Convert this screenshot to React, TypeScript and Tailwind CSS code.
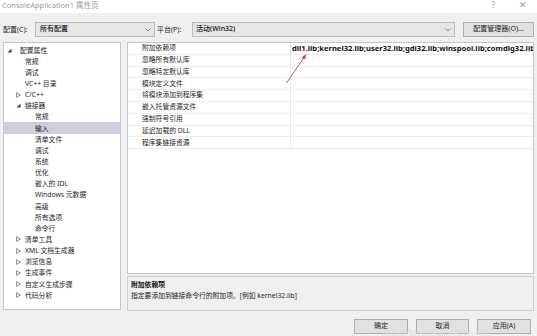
import React from 'react';

type Node = { t: string; k: 'l0' | 'l1t' | 'l1' | 'l2'; tri?: 'open' | 'closed'; sel?: boolean };

const tree: Node[] = [
  { t: '配置属性', k: 'l0', tri: 'open' },
  { t: '常规', k: 'l1' },
  { t: '调试', k: 'l1' },
  { t: 'VC++ 目录', k: 'l1' },
  { t: 'C/C++', k: 'l1t', tri: 'closed' },
  { t: '链接器', k: 'l1t', tri: 'open' },
  { t: '常规', k: 'l2' },
  { t: '输入', k: 'l2', sel: true },
  { t: '清单文件', k: 'l2' },
  { t: '调试', k: 'l2' },
  { t: '系统', k: 'l2' },
  { t: '优化', k: 'l2' },
  { t: '嵌入的 IDL', k: 'l2' },
  { t: 'Windows 元数据', k: 'l2' },
  { t: '高级', k: 'l2' },
  { t: '所有选项', k: 'l2' },
  { t: '命令行', k: 'l2' },
  { t: '清单工具', k: 'l1t', tri: 'closed' },
  { t: 'XML 文档生成器', k: 'l1t', tri: 'closed' },
  { t: '浏览信息', k: 'l1t', tri: 'closed' },
  { t: '生成事件', k: 'l1t', tri: 'closed' },
  { t: '自定义生成步骤', k: 'l1t', tri: 'closed' },
  { t: '代码分析', k: 'l1t', tri: 'closed' },
];

const padMap: Record<Node['k'], string> = {
  l0: 'pl-[3px]',
  l1t: 'pl-[12px]',
  l1: 'pl-[21px]',
  l2: 'pl-[31px]',
};
const slotMap: Record<Node['k'], string> = {
  l0: 'w-[13px]',
  l1t: 'w-[9px]',
  l1: 'w-0',
  l2: 'w-0',
};

const props = [
  '附加依赖项',
  '忽略所有默认库',
  '忽略特定默认库',
  '模块定义文件',
  '将模块添加到程序集',
  '嵌入托管资源文件',
  '强制符号引用',
  '延迟加载的 DLL',
  '程序集链接资源',
];

function Tri({ kind }: { kind: 'open' | 'closed' }) {
  if (kind === 'open')
    return (
      <svg width="5" height="5" viewBox="0 0 5 5">
        <polygon points="4.5,0.5 4.5,4.5 0.5,4.5" fill="#404040" />
      </svg>
    );
  return (
    <svg width="5" height="6" viewBox="0 0 5 6">
      <polygon points="0.6,0.6 4.4,3 0.6,5.4" fill="none" stroke="#707070" strokeWidth="0.8" />
    </svg>
  );
}

function Chevron() {
  return (
    <svg width="6" height="4" viewBox="0 0 6 4">
      <polyline points="0.5,0.5 3,3 5.5,0.5" fill="none" stroke="#777" strokeWidth="0.8" />
    </svg>
  );
}

export default function App() {
  return (
    <div className="relative w-[537px] h-[336px] overflow-hidden bg-[#f0f0f0] font-['Noto_Sans','Noto_Sans_CJK_SC',sans-serif] text-[#1e1e1e]">
      {/* title bar */}
      <div className="h-[13px] bg-white flex items-start justify-between">
        <div className="pl-[2px] text-[7.5px] leading-[10px] text-[#9a9a9a]">ConsoleApplication1 属性页</div>
        <div className="flex items-start gap-[24px] pr-[10px] text-[#9a9a9a]">
          <span className="text-[8px] leading-[10px]">?</span>
          <span className="text-[9px] leading-[10px]">✕</span>
        </div>
      </div>

      {/* toolbar */}
      <div className="mt-[9px] h-[15px] flex items-center pl-[3px] text-[7px]">
        <span className="w-[32px] leading-[15px]">配置(C):</span>
        <div className="w-[120px] h-[15px] bg-[#e6e6e6] border border-[#bcbcbc] flex items-center justify-between pl-[4px] pr-[3px]">
          <span className="text-[#111] font-medium">所有配置</span>
          <Chevron />
        </div>
        <span className="ml-[2px] w-[35px] leading-[15px]">平台(P):</span>
        <div className="w-[263px] h-[15px] bg-[#e6e6e6] border border-[#bcbcbc] flex items-center justify-between pl-[3px] pr-[3px]">
          <span className="text-[#111] font-medium">活动(Win32)</span>
          <Chevron />
        </div>
        <div className="ml-[8px] w-[71px] h-[15px] bg-[#e1e1e1] border border-[#adadad] flex items-center justify-center">
          配置管理器(O)...
        </div>
      </div>

      {/* main */}
      <div className="mt-[5px] flex gap-[6px] pl-[3px] text-[6.8px]">
        <div className="w-[118px] h-[268px] bg-white border border-[#c6c6c6] pt-[1.5px]">
          {tree.map((n, i) => (
            <div key={i} className={'flex items-center h-[11.15px] ' + padMap[n.k] + (n.sel ? ' bg-[#cdcfdc]' : '')}>
              <div className={'flex items-center shrink-0 ' + slotMap[n.k]}>{n.tri && <Tri kind={n.tri} />}</div>
              <span className="whitespace-nowrap leading-[11px]">{n.t}</span>
            </div>
          ))}
        </div>

        <div className="w-[407px] flex flex-col gap-[2px]">
          <div className="relative h-[232px] bg-white border border-[#c6c6c6] overflow-hidden">
            {props.map((p, i) => (
              <div key={i} className="flex h-[11.8px] border-b border-[#eeeeee]">
                <div className="w-[12px] shrink-0" />
                <div className="w-[151px] shrink-0 border-r border-[#e8e8e8] pl-[2px] flex items-center whitespace-nowrap">{p}</div>
                <div className="flex-1 pl-[1px] flex items-center whitespace-nowrap overflow-hidden">
                  {i === 0 && (
                    <span className="font-bold text-[7.6px] text-[#111]">
                      dll1.lib;kernel32.lib;user32.lib;gdi32.lib;winspool.lib;comdlg32.lib;advapi32.lib
                    </span>
                  )}
                </div>
              </div>
            ))}
          </div>
          <div className="h-[35px] bg-[#f0f0f0] border border-[#cfcfcf] pl-[3px] pt-[2px]">
            <div className="font-bold leading-[11px] text-[#111]">附加依赖项</div>
            <div className="leading-[12px] text-[#222]">指定要添加到链接命令行的附加项。[例如 kernel32.lib]</div>
          </div>
        </div>
      </div>

      {/* buttons */}
      <div className="mt-[8px] flex justify-end gap-[8px] pr-[6px] text-[7px]">
        <div className="w-[54px] h-[15px] bg-[#e1e1e1] border border-[#adadad] flex items-center justify-center">确定</div>
        <div className="w-[53px] h-[15px] bg-[#e1e1e1] border border-[#adadad] flex items-center justify-center">取消</div>
        <div className="w-[54px] h-[15px] bg-[#e1e1e1] border border-[#adadad] flex items-center justify-center">应用(A)</div>
      </div>

      {/* red arrow annotation */}
      <svg className="absolute left-0 top-0 pointer-events-none" width="537" height="336" viewBox="0 0 537 336">
        <line x1="286.5" y1="83" x2="305" y2="56" stroke="#e53935" strokeWidth="0.9" />
        <polygon points="306.5,54 301.5,57.5 304.8,59.6" fill="#e53935" />
      </svg>

      {/* watermark */}
      <div className="absolute left-[382px] top-[330px] text-[8px] leading-[6px] text-[#e0e0e0] whitespace-nowrap pointer-events-none">
        https://blog.csdn.net/cyyhhh
      </div>
    </div>
  );
}
